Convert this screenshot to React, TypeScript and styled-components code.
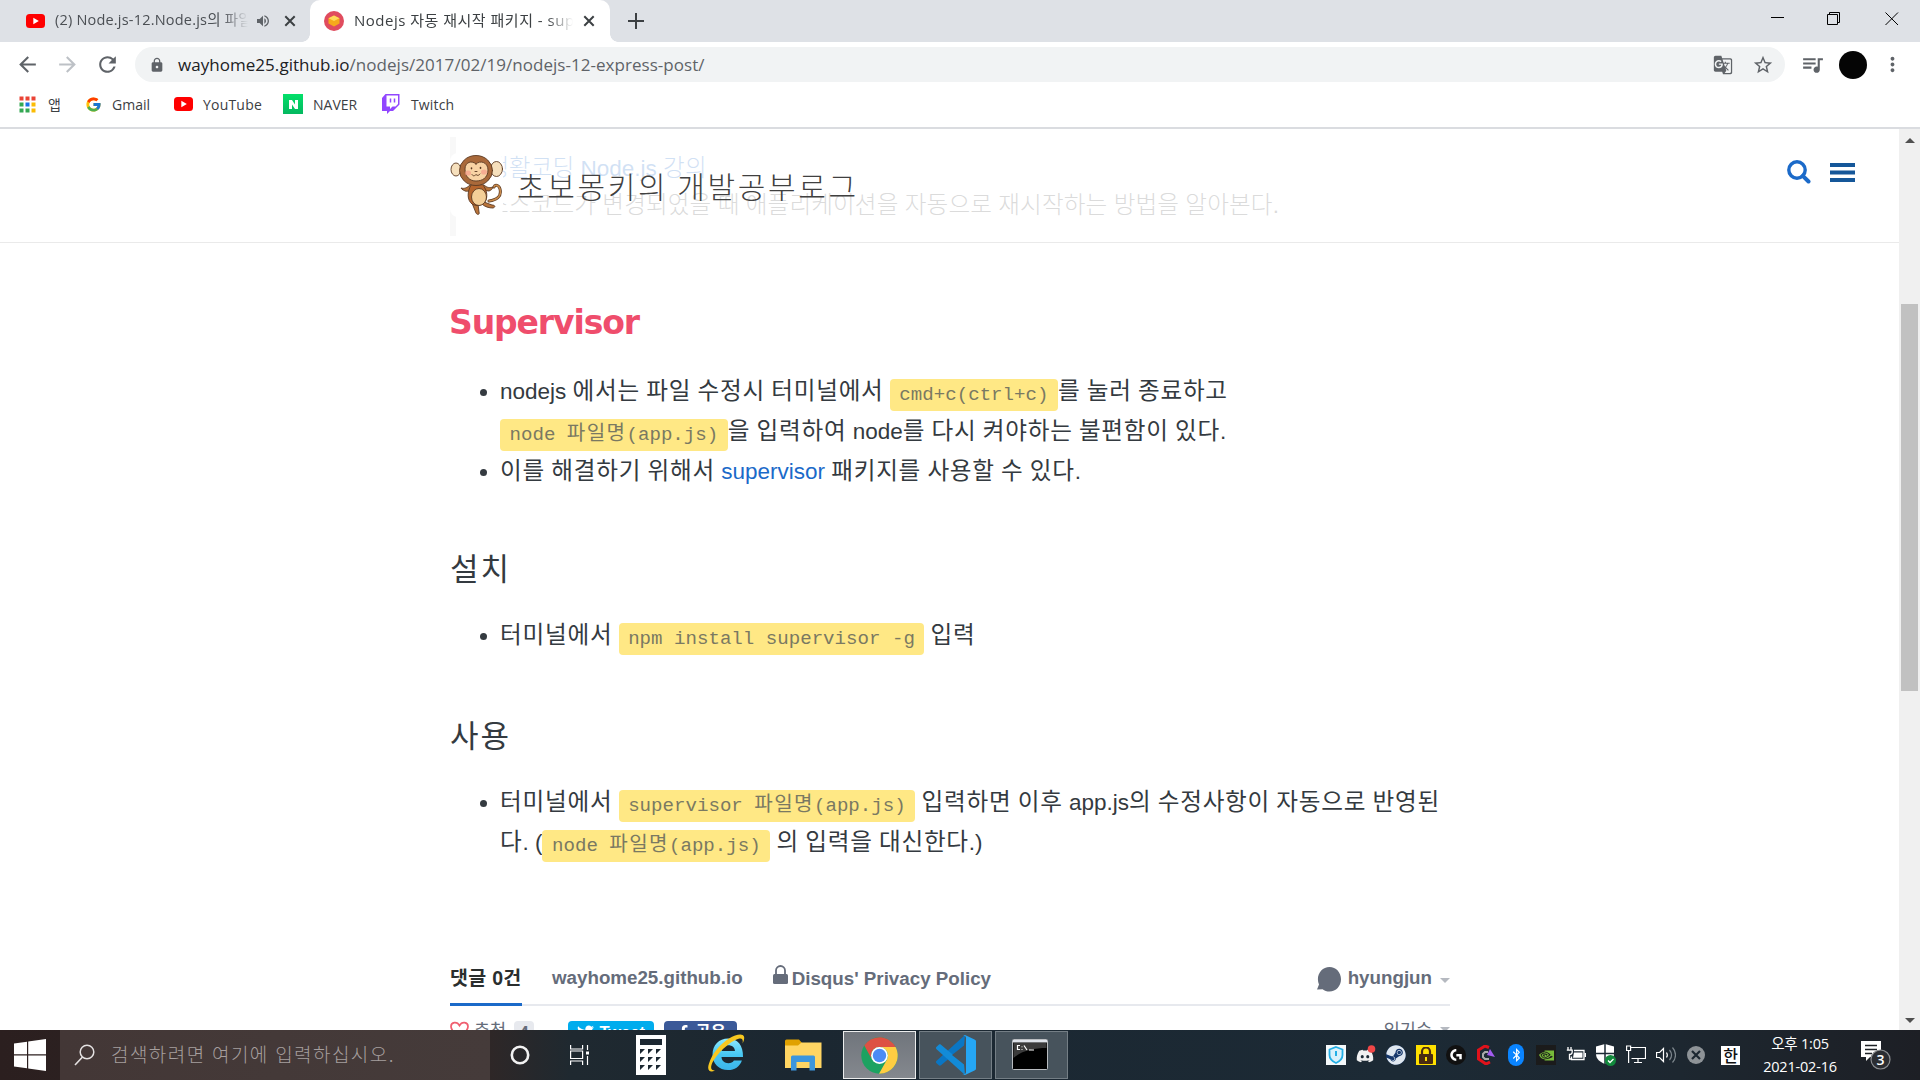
import React from "react";
import styled, { createGlobalStyle } from "styled-components";
import { FcGoogle } from "react-icons/fc";
import { FaDiscord, FaBluetoothB, FaTwitter, FaFacebookF, FaSteam } from "react-icons/fa";
import { SiNvidia, SiLogitechg } from "react-icons/si";
import { MdArrowBack, MdArrowForward, MdRefresh, MdLock, MdVolumeUp, MdGTranslate, MdStarBorder, MdQueueMusic, MdMoreVert } from "react-icons/md";

const Global = createGlobalStyle`
  * { box-sizing: border-box; }
  html, body { margin: 0; padding: 0; overflow: hidden; background: #fff; }
  svg { display: block; flex: none; }
`;

const uiFont = `"Open Sans", "Noto Sans CJK KR", sans-serif`;
const bodyFont = `"Liberation Sans", "Noto Sans CJK KR", sans-serif`;

const Screen = styled.div`
  width: 1920px;
  height: 1080px;
  display: flex;
  flex-direction: column;
  overflow: hidden;
  font-family: ${uiFont};
  white-space: nowrap;
`;

/* ---------- browser chrome ---------- */
const TabStrip = styled.div`
  height: 42px;
  flex: none;
  background: #dee1e6;
  display: flex;
  align-items: stretch;
`;
const Tab = styled.div<{ $active?: boolean; $w: number; $pad: number }>`
  width: ${(p) => p.$w}px;
  padding-left: ${(p) => p.$pad}px;
  display: flex;
  align-items: center;
  background: ${(p) => (p.$active ? "#fff" : "transparent")};
  border-radius: 10px 10px 0 0;
  color: ${(p) => (p.$active ? "#3c4043" : "#4b4f54")};
`;
const TabFoot = styled.span<{ $side: "left" | "right" }>`
  width: 8px;
  height: 8px;
  align-self: flex-end;
  margin-left: ${(p) => (p.$side === "left" ? -8 : 0)}px;
  background: radial-gradient(circle at ${(p) => (p.$side === "left" ? "0 0" : "100% 0")}, transparent 7.5px, #fff 8px);
`;
const TabTitle = styled.span<{ $w: number; $ml: number; $ls: number; $fs: number }>`
  width: ${(p) => p.$w}px;
  margin-left: ${(p) => p.$ml}px;
  font-size: ${(p) => p.$fs}px;
  line-height: 38px;
  padding-bottom: 2px;
  letter-spacing: ${(p) => p.$ls}px;
  overflow: hidden;
  mask-image: linear-gradient(to right, #000 calc(100% - 26px), transparent);
`;
const Slot = styled.span<{ $ml?: number; $w?: number; $c?: string; $mt?: number }>`
  display: flex;
  flex: none;
  justify-content: center;
  align-items: center;
  margin-left: ${(p) => p.$ml ?? 0}px;
  margin-top: ${(p) => p.$mt ?? 0}px;
  width: ${(p) => (p.$w ? p.$w + "px" : "auto")};
  color: ${(p) => p.$c ?? "inherit"};
`;
const Push = styled.span`
  flex: 1;
`;

const Toolbar = styled.div`
  height: 45px;
  flex: none;
  display: flex;
  align-items: center;
  color: #5f6368;
`;
const AddressBar = styled.div`
  width: 1650px;
  height: 35px;
  margin-left: 15px;
  border-radius: 18px;
  background: #f1f3f4;
  display: flex;
  align-items: center;
`;
const Url = styled.span`
  margin-left: 13px;
  font-size: 17px;
  letter-spacing: 0.04px;
  color: #5f6368;
  b { font-weight: 400; color: #202124; }
`;
const Avatar = styled.span`
  width: 28px;
  height: 28px;
  margin-left: 14px;
  border-radius: 50%;
  background: #050505;
`;
const Bookmarks = styled.div`
  height: 42px;
  flex: none;
  display: flex;
  align-items: center;
  padding: 0 0 6px 19px;
  border-bottom: 2px solid #dadce0;
  font-size: 14px;
  color: #3c4043;
`;
const Mark = styled.span<{ $w: number; $gap: number; $ls?: number }>`
  display: flex;
  align-items: center;
  gap: ${(p) => p.$gap}px;
  width: ${(p) => p.$w}px;
  letter-spacing: ${(p) => p.$ls ?? 0}px;
`;
const NaverBox = styled.span`
  width: 20px;
  height: 20px;
  display: flex;
  align-items: center;
  justify-content: center;
  background: linear-gradient(#03e06a, #04b860);
`;

/* ---------- web page ---------- */
const Viewport = styled.div`
  height: 901px;
  flex: none;
  display: flex;
  overflow: hidden;
`;
const Page = styled.div`
  position: relative;
  width: 1899px;
  height: 901px;
  overflow: hidden;
  font-family: ${bodyFont};
`;
const SiteHeader = styled.header`
  position: absolute;
  inset: 0 0 auto 0;
  height: 114px;
  padding-left: 450px;
  display: flex;
  background: rgba(255, 255, 255, 0.8);
  border-bottom: 1px solid #eaeaea;
`;
const LogoBox = styled.span`
  width: 53px;
  height: 64px;
  margin-top: 24px;
  border-radius: 8px;
  background: #fff;
`;
const SiteTitle = styled.span`
  width: 340px;
  margin: 36px 0 0 14px;
  font-size: 30px;
  line-height: 46px;
  letter-spacing: 2.65px;
  word-spacing: -2px;
  color: #404040;
  font-weight: 300;
`;
const HeaderTools = styled.span`
  display: flex;
  gap: 19px;
  align-items: flex-start;
  margin: 31px 0 0 930px;
`;
const Article = styled.article`
  width: 1000px;
  margin-left: 450px;
  font-size: 22.5px;
  line-height: 40px;
  color: #343a40;
`;
const Quote = styled.blockquote`
  height: 99px;
  margin: 8px 0 0;
  padding: 13px 0 0 31px;
  border-left: 6px solid #dcdcdc;
  line-height: 37px;
  color: #4a4a4a;
  font-weight: 300;
`;
const A = styled.a`
  color: #1b6ac9;
`;
const Ko = styled.span<{ $ls: string }>`
  font-size: 1.05em;
  line-height: 1;
  letter-spacing: ${(p) => p.$ls};
`;
const Title = styled.h1`
  margin: 67px 0 0 -1px;
  font: 700 33px/40px "DejaVu Sans", sans-serif;
  letter-spacing: -1.1px;
  color: #ef4d6c;
  height: 40px;
`;
const Sub = styled.h3<{ $mt: number }>`
  height: 40px;
  margin: ${(p) => p.$mt}px 0 0;
  font-size: 31px;
  line-height: 40px;
  font-weight: 400;
  letter-spacing: 2px;
`;
const List = styled.ul<{ $mt: number }>`
  margin: ${(p) => p.$mt}px 0 0;
  padding: 0 0 0 50px;
`;
const Item = styled.li`
  height: auto;
`;
const CodeBox = styled.code`
  padding: 4.6px 9.5px;
  border-radius: 4px;
  background: #ffe885;
  color: #7a7962;
  font-family: "Liberation Mono", "Noto Sans CJK KR", monospace;
  font-size: 19.125px;
  line-height: 1;
  font-weight: 400;
  vertical-align: -1px;
`;

/* Hangul runs are set slightly larger on a full-em advance, Latin keeps its own metrics. */
const Mixed = ({ t, ls = "0.032em" }: { t: string; ls?: string }) => (
  <>
    {t.split(/([\uac00-\ud7a3]+)/).map((s, i) => (i % 2 ? <Ko key={i} $ls={ls}>{s}</Ko> : s))}
  </>
);
const Code = ({ t }: { t: string }) => (
  <CodeBox><Mixed t={t} ls="0.07em" /></CodeBox>
);

const DisqusNav = styled.nav`
  height: 59px;
  margin-top: 84px;
  display: flex;
  border-bottom: 2px solid #e7e9ee;
  font-size: 18.75px;
  font-weight: 700;
  line-height: 30px;
  color: #656c7a;
`;
const CountTab = styled.span`
  width: 72px;
  height: 59px;
  border-bottom: 3px solid #1b6ac9;
  color: #2a2e2e;
  font-size: 19.5px;
  line-height: 62px;
  letter-spacing: 0.3px;
`;
const DisqusRow = styled.div`
  margin-top: 15px;
  height: 30px;
  display: flex;
  align-items: flex-start;
  font-size: 17.5px;
  line-height: 24px;
  color: #656c7a;
`;
const Chip = styled.span<{ $bg: string; $w: number; $ml: number; $c?: string }>`
  width: ${(p) => p.$w}px;
  height: 25px;
  padding-bottom: 3px;
  margin-left: ${(p) => p.$ml}px;
  display: flex;
  align-items: center;
  justify-content: center;
  gap: 5px;
  border-radius: 4px;
  background: ${(p) => p.$bg};
  color: ${(p) => p.$c ?? "#fff"};
  font-size: 16.5px;
  line-height: 20px;
  font-weight: 700;
`;
const Caret = styled.i<{ $mt: number }>`
  border: 5px solid transparent;
  border-top-color: #b5b9c0;
  border-bottom: 0;
  height: 5px;
  margin: ${(p) => p.$mt}px 0 0 8px;
`;

const ScrollBar = styled.div`
  width: 21px;
  background: #f0f0f0;
  display: flex;
  flex-direction: column;
  align-items: center;
`;
const Arrow = styled.i<{ $down?: boolean; $mt: number }>`
  border: 5px solid transparent;
  border-${(p) => (p.$down ? "top" : "bottom")}-color: #505050;
  border-${(p) => (p.$down ? "bottom" : "top")}-width: 0;
  margin-top: ${(p) => p.$mt}px;
`;
const Thumb = styled.span`
  width: 17px;
  height: 387px;
  margin-top: 161px;
  background: #c1c1c1;
`;

/* ---------- taskbar ---------- */
const Taskbar = styled.div`
  height: 50px;
  flex: none;
  display: flex;
  align-items: center;
  background: linear-gradient(to right, #2b1f1f 0, #2e2727 490px, #1f2930 570px, #1b2731 800px, #1c2a35 1400px, #1d2730 1680px, #1d1f25 1920px);
  color: #fff;
`;
const Start = styled.span`
  width: 60px;
  padding-left: 14px;
`;
const SearchBox = styled.span`
  width: 430px;
  height: 50px;
  padding-left: 14px;
  display: flex;
  align-items: center;
  background: linear-gradient(to right, #433736, #453b3a);
  color: #a69f9e;
  font: 300 19px/50px "Noto Sans CJK KR", sans-serif;
`;
const SearchText = styled.span`
  margin: -3px 0 0 16px;
  letter-spacing: 1.45px;
  word-spacing: 0.7px;
`;
const TaskButton = styled.span<{ $active?: boolean; $ml: number }>`
  width: 73px;
  height: 48px;
  margin-left: ${(p) => p.$ml}px;
  display: flex;
  align-items: center;
  justify-content: center;
  background: ${(p) => (p.$active ? "linear-gradient(#70757c, #84888e)" : "#47535c")};
  border: 1px solid ${(p) => (p.$active ? "#eceded" : "#747e85")};
`;
const Tray = styled.span`
  display: flex;
  margin-left: 253px;
`;
const TrayIcon = styled.span<{ $bg?: string; $r?: string }>`
  width: 20px;
  height: 20px;
  margin: 0 5px;
  display: flex;
  align-items: center;
  justify-content: center;
  background: ${(p) => p.$bg ?? "transparent"};
  border-radius: ${(p) => p.$r ?? "0"};
`;
const Ime = styled.span`
  width: 19px;
  height: 19px;
  margin-left: 10px;
  background: #fff;
  color: #111;
  font: 500 16px/18px "Noto Sans CJK KR", sans-serif;
  text-align: center;
`;
const Clock = styled.span`
  width: 90px;
  margin: 0 0 0 15px;
  display: flex;
  flex-direction: column;
  align-items: center;
  font-size: 14.5px;
  line-height: 23px;
  letter-spacing: -0.2px;
`;
const Notice = styled.span`
  width: 34px;
  margin-left: 16px;
`;

const YouTube = ({ w = 19 }: { w?: number }) => (
  <svg width={w} height={14} viewBox="0 0 19 14"><rect width="19" height="14" rx="3.5" fill="#f00" /><path d="M7.3 3.8v6.4L12.8 7z" fill="#fff" /></svg>
);
const Close = ({ c = "#3c4043" }: { c?: string }) => (
  <svg width="12" height="12" viewBox="0 0 12 12"><path d="M1.3 1.3l9.4 9.4M10.7 1.3L1.3 10.7" stroke={c} strokeWidth="2" /></svg>
);
const Monkey = () => (
  <svg width="53" height="64" viewBox="0 0 53 64" stroke="#5b3a22" strokeWidth="0.9" strokeLinecap="round" strokeLinejoin="round">
    <path d="M39 48c7-1 13-4 11-12-1-4-5-5-6-2" fill="none" stroke="#5b3a22" strokeWidth="3" />
    <path d="M39 48c7-1 13-4 11-12-1-4-5-5-6-2" fill="none" stroke="#c98a4b" strokeWidth="1.6" />
    <path d="M20 32c-3 3-6 4-9 3 1 2 3 2 4 3 4 1 6-1 8-3z" fill="#b9743a" />
    <path d="M34 32c3 3 6 3 9 2-1 3-2 3-4 4-4 0-6-2-8-4z" fill="#b9743a" />
    <path d="M22 50l4 10c1 2 4 2 3-1l-1-8z" fill="#b9743a" />
    <path d="M34 49l8 3c3 0 4 2 1 3-4 0-8-1-11-4z" fill="#b9743a" />
    <path d="M21 32c-4 7-4 15 1 19 5 3 12 1 14-4 2-6 0-11-3-15z" fill="#b5652d" />
    <ellipse cx="29" cy="44" rx="7.5" ry="8.5" fill="#f3cf98" />
    <ellipse cx="6" cy="16.500" rx="5" ry="6.500" fill="#f6e0bd" />
    <ellipse cx="46.500" cy="16" rx="6" ry="7.500" fill="#f6e0bd" />
    <ellipse cx="26" cy="17.500" rx="16.500" ry="15" fill="#a9693a" />
    <path d="M26 11c-4-4-11-2-11 5 0 8 5 12 11 12s12-3 12-11c0-8-8-10-12-6z" fill="#f8d3a4" />
    <ellipse cx="18" cy="20" rx="3" ry="2.600" fill="#f6a08c" stroke="none" opacity=".75" />
    <ellipse cx="34" cy="19" rx="3" ry="2.600" fill="#f6a08c" stroke="none" opacity=".75" />
    <path d="M21.500 15v.6M30.500 14.600v.6" strokeWidth="1.600" />
    <path d="M22 21.500c1 2 2.500 1.500 4 0 1.500 1.500 3 1 4-.5M25 18.500h2" fill="none" />
  </svg>
);
const dots = ["#ea4335", "#ea4335", "#ea4335", "#34a853", "#1a73e8", "#fbbc04", "#34a853", "#34a853", "#fbbc04"];

const Explorer = () => (
  <svg width="38" height="40" viewBox="0 0 38 40">
    <defs><linearGradient id="ie" x1="0" y1="0" x2="0" y2="1"><stop offset="0" stopColor="#8fe9fd" /><stop offset=".5" stopColor="#49c8f2" /><stop offset="1" stopColor="#3bb4ea" /></linearGradient></defs>
    <path d="M36 24H14.500c.3 4 3.200 6.200 6.800 6.200 2.700 0 4.500-1 5.600-2.800h8C32.800 33.600 27.500 37 21 37 12 37 5.500 31 5.500 21.500S12 5.500 21 5.500c9.500 0 15.400 6.800 15 18.500zM28 18c-.3-3.600-3-5.700-6.600-5.700S15 14.500 14.600 18z" fill="url(#ie)" />
    <path d="M8 37.500c-5 2.500-8.500 0-6-7C5 21 13 11 22 5.500 29 1 36 0 37 3.500c.5 2 0 4.500-1.500 7 .8-3.500 0-5.500-3-5C24 7 8 22 4.500 32c-1 3.500 0 5.500 3.500 5.500z" fill="#f8c820" />
  </svg>
);
const Folder = () => (
  <svg width="37" height="32" viewBox="0 0 37 32">
    <path d="M0 2a1.500 1.500 0 011.500-1.500H14L17 4v6H0z" fill="#e0a100" />
    <path d="M0 6.500h13l3.500-3H36.500V29H0z" fill="#ffd563" />
    <path d="M6 31.500V18a1.500 1.500 0 011.500-1.500h21A1.500 1.500 0 0130 18v13.500h-5.500V23h-13v8.500z" fill="#3c96dd" />
  </svg>
);
const Chrome = () => (
  <svg width="37" height="37" viewBox="-18.500 -18.500 37 37">
    <circle r="18.200" fill="#1da261" />
    <path d="M0-8.500H16.100A18.200 18.200 0 00-15.200-10L-7.400 4.200A8.500 8.500 0 010-8.500z" fill="#dd5144" />
    <path d="M0-8.500H16.100A18.200 18.200 0 01-.5 18.200L7.400 4.200A8.500 8.500 0 000-8.500z" fill="#ffcd42" />
    <circle r="8.400" fill="#fff" /><circle r="6.700" fill="#4c8bf5" />
  </svg>
);
const VsCode = () => (
  <svg width="40" height="40" viewBox="0 0 40 40">
    <path d="M29 0l-1 11L5 30.300c-.7.500-1.500.5-2.200 0L.6 28.200c-.8-.8-.8-1.700 0-2.500z" fill="#0a76c4" />
    <path d="M29 40l-1-11L5 9.700c-.7-.5-1.500-.5-2.200 0L.6 11.800c-.8.8-.8 1.700 0 2.500z" fill="#128bd8" />
    <path d="M29 0l9.500 4.500c1 .5 1.500 1 1.500 2v27c0 1-.5 1.500-1.500 2L29 40c-1 0-2-.4-2.600-1 1.600 1 3.600 0 3.600-2V3c0-2-2-3-3.600-2 .6-.6 1.600-1 2.600-1z" fill="#25a6f4" />
    <path d="M30 9v22L16 20z" fill="#47535c" />
  </svg>
);
const Terminal = () => (
  <svg width="36" height="31" viewBox="0 0 36 31">
    <rect x=".5" y=".5" width="35" height="30" rx="1" fill="#000" stroke="#b9bcc0" />
    <rect x="1" y="1" width="34" height="2.500" fill="#dfe3ea" />
    <path d="M1.500 4H34.500V9C22 9 9 12 1.500 19z" fill="#4a4a4a" opacity=".8" />
    <path d="M8 6.500H5.500v4H8M10 7.500v.8M10 10v.8M12 6.500l3 4.500M17 11h5" stroke="#fff" strokeWidth="1.200" fill="none" />
  </svg>
);

export default function App() {
  return (
    <Screen>
      <Global />
      <TabStrip>
        <Tab $w={310} $pad={26}>
          <YouTube />
          <TabTitle $w={193} $ml={10} $ls={0.2} $fs={14.5}>(2) Node.js-12.Node.js의 파일</TabTitle>
          <Slot $ml={8} $w={14} $c="#5f6368"><MdVolumeUp size={16} /></Slot>
          <Slot $ml={14}><Close /></Slot>
        </Tab>
        <TabFoot $side="left" />
        <Tab $active $w={300} $pad={14}>
          <svg width="20" height="20" viewBox="0 0 20 20"><circle cx="10" cy="10" r="10" fill="#e04c5e" /><path d="M10 4.500l5.500 2.800v5.200L10 15.500l-5.500-3V7.300z" fill="#f6a91b" /><path d="M10 4.500l5.500 2.800L10 10 4.500 7.300z" fill="#ffd95a" /></svg>
          <TabTitle $w={219} $ml={10} $ls={0.5} $fs={15}>Nodejs 자동 재시작 패키지 - sup</TabTitle>
          <Slot $ml={10}><Close /></Slot>
        </Tab>
        <TabFoot $side="right" />
        <Slot $ml={10} $w={16}><svg width="16" height="16"><path d="M8 0v16M0 8h16" stroke="#3c4043" strokeWidth="2" /></svg></Slot>
        <Push />
        <Slot $w={14} $mt={-8}><svg width="14" height="14"><path d="M0 7.500h13" stroke="#000" /></svg></Slot>
        <Slot $ml={42} $w={14} $mt={-5}><svg width="14" height="14" fill="none" stroke="#000"><path d="M.5 2.500h10v10H.5zM2.500 2.500V.5h10v10h-2" /></svg></Slot>
        <Slot $ml={44} $w={14} $mt={-5}><svg width="14" height="14" fill="none" stroke="#000"><path d="M.5.5l12.500 12.500M13 .5L.5 13" /></svg></Slot>
        <Slot $w={21} />
      </TabStrip>

      <Toolbar>
        <Slot $ml={15}><MdArrowBack size={25} /></Slot>
        <Slot $ml={15} $c="#bdc1c6"><MdArrowForward size={25} /></Slot>
        <Slot $ml={15}><MdRefresh size={25} /></Slot>
        <AddressBar>
          <Slot $ml={14}><MdLock size={16} /></Slot>
          <Url><b>wayhome25.github.io</b>/nodejs/2017/02/19/nodejs-12-express-post/</Url>
          <Push />
          <Slot><MdGTranslate size={20} /></Slot>
          <Slot $ml={19}><MdStarBorder size={22} /></Slot>
          <Slot $w={11} />
        </AddressBar>
        <Slot $ml={15}><MdQueueMusic size={25} /></Slot>
        <Avatar />
        <Slot $ml={14}><MdMoreVert size={23} /></Slot>
      </Toolbar>

      <Bookmarks>
        <Mark $w={66} $gap={12}>
          <svg width="17" height="17">{dots.map((c, i) => <rect key={i} x={(i % 3) * 6 + 0.5} y={Math.floor(i / 3) * 6 + 0.5} width="4" height="4" fill={c} />)}</svg>
          앱
        </Mark>
        <Mark $w={89} $gap={10}><FcGoogle size={17} />Gmail</Mark>
        <Mark $w={109} $gap={10} $ls={0.2}><YouTube />YouTube</Mark>
        <Mark $w={98} $gap={10}>
          <NaverBox><svg width="9" height="9"><path d="M0 0h3l3 4.600V0h3v9H6L3 4.400V9H0z" fill="#fff" /></svg></NaverBox>NAVER
        </Mark>
        <Mark $w={90} $gap={11} $ls={0.15}>
          <svg width="19" height="20" viewBox="0 0 19 20"><path d="M4.500 0H18.500V10.500L12 17H9L6 20V17H1V4z" fill="#9146ff" /><path d="M5.500 1.500h11.500V10l-2.500 2.500h-3L9 15v-2.500H5.500z" fill="#fff" /><path d="M9.500 4.500v4M13.500 4.500v4" stroke="#9146ff" strokeWidth="1.500" /></svg>
          Twitch
        </Mark>
      </Bookmarks>

      <Viewport>
        <Page>
          <Article>
            <Quote>
              <A><Mixed t="생활코딩 Node.js 강의" ls="0.004em" /></A><br />
              <Mixed t="소스코드가 변경되었을 때 애플리케이션을 자동으로 재시작하는 방법을 알아본다." ls="0.004em" />
            </Quote>
            <Title>Supervisor</Title>
            <List $mt={29}>
              <Item>
                <Mixed t="nodejs 에서는 파일 수정시 터미널에서 " /><Code t="cmd+c(ctrl+c)" /><Mixed t="를 눌러 종료하고" /><br />
                <Code t="node 파일명(app.js)" /><Mixed t="을 입력하여 node를 다시 켜야하는 불편함이 있다." />
              </Item>
              <Item><Mixed t="이를 해결하기 위해서 " /><A>supervisor</A><Mixed t=" 패키지를 사용할 수 있다." /></Item>
            </List>
            <Sub $mt={58}>설치</Sub>
            <List $mt={26}>
              <Item><Mixed t="터미널에서 " /><Code t="npm install supervisor -g" /><Mixed t=" 입력" /></Item>
            </List>
            <Sub $mt={61}>사용</Sub>
            <List $mt={26}>
              <Item>
                <Mixed t="터미널에서 " /><Code t="supervisor 파일명(app.js)" /><Mixed t=" 입력하면 이후 app.js의 수정사항이 자동으로 반영된" /><br />
                <Mixed t="다. (" /><Code t="node 파일명(app.js)" /><Mixed t=" 의 입력을 대신한다.)" />
              </Item>
            </List>
            <DisqusNav>
              <CountTab>댓글 0건</CountTab>
              <Slot $ml={30} $mt={5}>wayhome25.github.io</Slot>
              <Slot $ml={30} $mt={-2}><svg width="15" height="20" viewBox="0 0 15 20"><rect y="9" width="15" height="10" rx="1.500" fill="#656c7a" /><path d="M3 10V5.500a4.500 4.500 0 019 0V9" fill="none" stroke="#656c7a" strokeWidth="1.800" /></svg></Slot>
              <Slot $ml={4} $mt={6}>Disqus' Privacy Policy</Slot>
              <Push />
              <Slot $mt={8}><svg width="24" height="25" viewBox="0 0 24 25"><path d="M12.500 0C19 0 24 5.500 24 12.200S19 24.500 12.500 24.500c-2.600 0-5-.8-6.900-2.300L0 22.600l2-5.200C1.300 15.800.9 14.100.9 12.200.9 5.500 6 0 12.500 0z" fill="#656c7a" /></svg></Slot>
              <Slot $ml={7} $mt={5}>hyungjun</Slot>
              <Caret $mt={31} />
            </DisqusNav>
            <DisqusRow>
              <svg width="19" height="18" viewBox="0 0 19 18"><path d="M9.500 16.500C4 12 1 9 1 5.500 1 1 7 0 9.500 4.500 12 0 18 1 18 5.500c0 3.500-3 6.500-8.500 11z" fill="none" stroke="#f05f70" strokeWidth="1.700" /></svg>
              <Slot $ml={5} $mt={-3}>추천</Slot>
              <Chip $bg="#e7e9ee" $w={20} $ml={8} $c="#656c7a">4</Chip>
              <Chip $bg="#00aced" $w={86} $ml={34}><FaTwitter size={17} />Tweet</Chip>
              <Chip $bg="#3b5998" $w={73} $ml={10}><FaFacebookF size={15} />공유</Chip>
              <Push />
              <Slot $mt={-3}>인기순</Slot>
              <Caret $mt={6} />
            </DisqusRow>
          </Article>
          <SiteHeader>
            <LogoBox><Monkey /></LogoBox>
            <SiteTitle>초보몽키의 개발공부로그</SiteTitle>
            <HeaderTools>
              <svg width="24" height="24" fill="none" stroke="#1b6ac9"><circle cx="10" cy="10" r="8.200" strokeWidth="3.400" /><path d="M15.800 15.800l5.700 5.700" strokeWidth="4" strokeLinecap="round" /></svg>
              <svg width="25" height="24"><path d="M0 5h25M0 12.500h25M0 20h25" stroke="#155799" strokeWidth="4" /></svg>
            </HeaderTools>
          </SiteHeader>
        </Page>
        <ScrollBar>
          <Arrow $mt={9} />
          <Thumb />
          <Push />
          <Arrow $down $mt={0} />
          <Slot $mt={7} />
        </ScrollBar>
      </Viewport>

      <Taskbar>
        <Start><svg width="32" height="32" viewBox="0 0 32 32"><path d="M0 4.500L13 2.700V15.300H0zM14.200 2.500L32 0V15.300H14.200zM0 16.500H13V29.300L0 27.500zM14.200 16.500H32V32L14.200 29.500z" fill="#fff" /></svg></Start>
        <SearchBox>
          <svg width="21" height="22" fill="none" stroke="#e4e1e1"><circle cx="13" cy="8" r="6.800" strokeWidth="1.500" /><path d="M8.500 13L1 21" strokeWidth="1.600" /></svg>
          <SearchText>검색하려면 여기에 입력하십시오.</SearchText>
        </SearchBox>
        <Slot $ml={20}><svg width="20" height="20"><circle cx="10" cy="10" r="8.200" fill="none" stroke="#f2f2f2" strokeWidth="2.600" /></svg></Slot>
        <Slot $ml={40}><svg width="20" height="20" fill="none" stroke="#fff" strokeWidth="1.200"><path d="M.6 0v4h12V0M.6 20v-4h12v4M.6 6h12v7.500H.6zM17.500 0v5M17.500 11v9" /><path d="M16 6.500h3v3h-3z" fill="#fff" stroke="none" /></svg></Slot>
        <Slot $ml={46}><svg width="30" height="40" viewBox="0 0 30 40"><path d="M0 0h30v40H0z" fill="#fff" /><path d="M4 4h22v6H4zM4 14h5l-5 5zM12 14h5l-5 5zM20 14h5l-5 5zM4 22h5l-5 5zM12 22h5l-5 5zM20 22h5l-5 5zM4 30h5l-5 5zM12 30h5l-5 5zM20 30h5l-5 5z" fill="#1b2731" /></svg></Slot>
        <Slot $ml={41} $mt={-4}><Explorer /></Slot>
        <Slot $ml={40}><Folder /></Slot>
        <TaskButton $active $ml={21}><Chrome /></TaskButton>
        <TaskButton $ml={3}><VsCode /></TaskButton>
        <TaskButton $ml={3}><Slot $ml={-3} $mt={-2}><Terminal /></Slot></TaskButton>
        <Tray>
          <TrayIcon $bg="#f4f8fa"><svg width="16" height="18" viewBox="0 0 16 18"><path d="M8 1l6.500 2.500V9c0 4-3 6.500-6.500 8C4.500 15.500 1.500 13 1.500 9V3.500z" fill="#d9f1fb" stroke="#23aee5" strokeWidth="1.800" /><path d="M8 5v5" stroke="#23aee5" strokeWidth="2" /></svg></TrayIcon>
          <TrayIcon><svg width="20" height="20" viewBox="0 0 20 20"><g transform="translate(0 2)"><FaDiscord size={18} color="#f1f1f1" /></g><circle cx="15.500" cy="4" r="3.800" fill="#f04747" /></svg></TrayIcon>
          <TrayIcon $bg="#15376b" $r="50%"><FaSteam size={20} color="#dfe7ef" /></TrayIcon>
          <TrayIcon $bg="#ffe000"><svg width="14" height="17"><rect y="7" width="14" height="10" rx="1" fill="#4a2c12" /><path d="M3 8V4.500a4 4 0 018 0V8" fill="none" stroke="#4a2c12" strokeWidth="2.200" /><path d="M7 10v4" stroke="#ffe000" strokeWidth="2" /></svg></TrayIcon>
          <TrayIcon $bg="#111" $r="50%"><SiLogitechg size={12} color="#fff" /></TrayIcon>
          <TrayIcon><svg width="20" height="20" fill="none"><path d="M13 2.500L9 1 2.500 5v9L10 19l4-2" stroke="#e0121b" strokeWidth="3" /><path d="M12 7H9L7 9v3l2 2h4" stroke="#aaa" strokeWidth="2" /><path d="M14 4l5 8-8-2z" fill="#a45cf0" /></svg></TrayIcon>
          <TrayIcon><svg width="16" height="22" viewBox="0 0 16 22"><rect width="16" height="22" rx="8" fill="#0a84ff" /><g transform="translate(1.500 4)"><FaBluetoothB size={14} color="#fff" /></g></svg></TrayIcon>
          <TrayIcon $bg="#1b1b1b"><SiNvidia size={15} color="#76b93a" /></TrayIcon>
          <TrayIcon><svg width="20" height="20" fill="none" stroke="#fff" strokeWidth="1.300"><path d="M2 2v3M5 2v3M.8 5.200h5.400v2C6 9 5 9.500 3.500 9.500V14H5" /><path d="M8 5.500h10v9H5.500v-3M19.500 8v4" /><path d="M8 7.500h8.500v5.200H7z" fill="#fff" stroke="none" /></svg></TrayIcon>
          <TrayIcon><svg width="20" height="24" viewBox="0 0 20 24"><path d="M9 1l9 2.500V11c0 5-4 8-9 10-5-2-9-5-9-10V3.500z" fill="#fff" /><path d="M9 1v20M0 10.500h18" stroke="#1c2a35" strokeWidth="1.500" /><circle cx="14.500" cy="17.500" r="5.500" fill="#11893c" /><path d="M12 17.500l2 2 3.500-3.500" stroke="#fff" strokeWidth="1.300" fill="none" /></svg></TrayIcon>
          <TrayIcon><svg width="20" height="20" fill="none" stroke="#fff" strokeWidth="1.200"><path d="M5 2.500h14.500v11H5.500M12 13.500v4M8 17.500h8M.6 1h4v4.500h-4zM2.600 5.500V18" /></svg></TrayIcon>
          <TrayIcon><svg width="20" height="20" fill="none" stroke="#fff" strokeWidth="1.200"><path d="M.6 7.500h3L7.500 3.500v13l-4-4h-3z" /><path d="M10.500 7.500c1 1.500 1 3.500 0 5" /><path d="M13.500 5c2.500 3 2.500 7 0 10M16.500 2.500c4 4.500 4 10.500 0 15" stroke="#7d868c" /></svg></TrayIcon>
          <TrayIcon><svg width="18" height="18"><circle cx="9" cy="9" r="9" fill="#8e9397" /><path d="M5 5l8 8M13 5l-8 8" stroke="#1c2731" strokeWidth="2.200" /></svg></TrayIcon>
        </Tray>
        <Ime>한</Ime>
        <Clock><span>오후 1:05</span><span>2021-02-16</span></Clock>
        <Notice>
          <svg width="32" height="32" viewBox="0 0 32 32"><path d="M0 2h20v16H9l-4 4v-4H0z" fill="#fff" /><path d="M4 6.500h12M4 10.500h12M4 14.500h7" stroke="#1d2025" strokeWidth="1.300" /><circle cx="19.500" cy="20.500" r="9.500" fill="#2b2d32" stroke="#8b8d90" strokeWidth="1.200" /><text x="19.500" y="25.500" textAnchor="middle" fontSize="14" fontWeight="600" fill="#fff">3</text></svg>
        </Notice>
      </Taskbar>
    </Screen>
  );
}
